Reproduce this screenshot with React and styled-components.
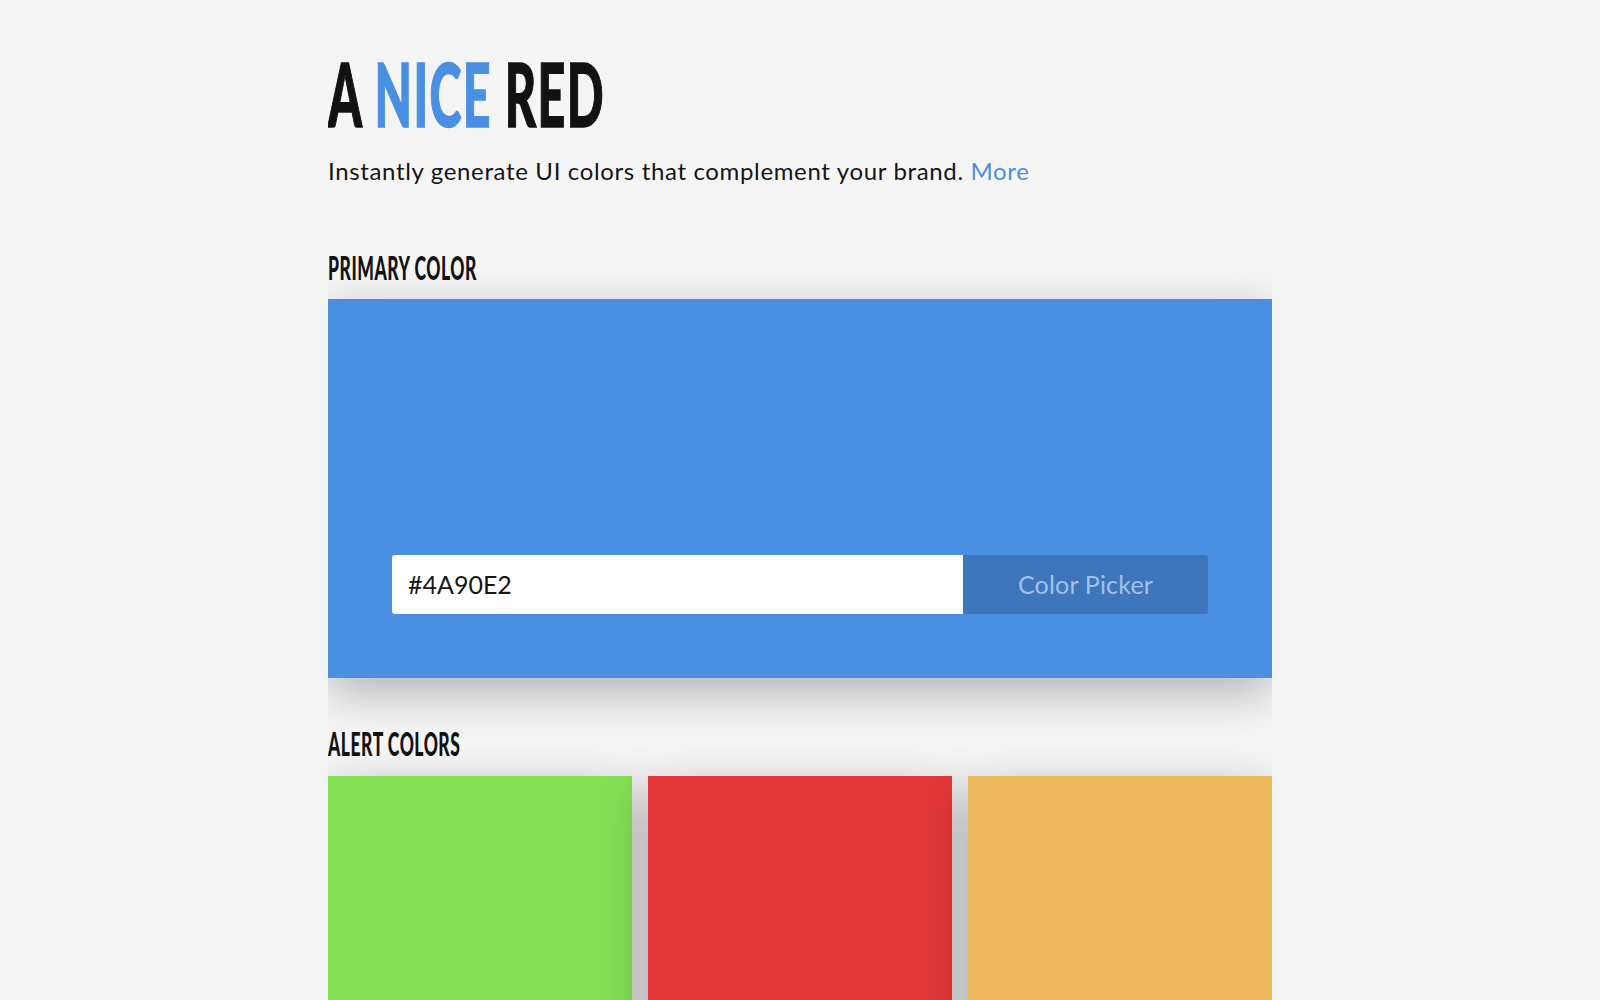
import React from 'react';
import styled, { createGlobalStyle } from 'styled-components';

const GlobalStyle = createGlobalStyle`
    * {
        box-sizing: border-box;
    }

    body {
        margin: 0;
        background: #f5f5f5;
        font-family: Lato, "Noto Sans", sans-serif;
        color: #141414;
    }
`;

const Page = styled.div`
    width: 944px;
    margin: 0 auto;
    padding-top: 49px;
    height: 1000px;
    overflow: hidden;
`;

// tall condensed display type: a heavy face squeezed horizontally
const Condensed = styled.h1`
    display: block;
    width: max-content;
    margin: ${({ $top }) => $top || 0}px 0 0;
    font-family: Lato, "Liberation Sans", sans-serif;
    font-weight: 900;
    font-size: ${({ $size }) => $size}px;
    line-height: 1;
    letter-spacing: ${({ $spacing }) => $spacing || 0}px;
    color: #121212;
    text-transform: uppercase;
    white-space: nowrap;
    transform: scaleX(${({ $squeeze }) => $squeeze});
    transform-origin: left top;
    -webkit-text-stroke: ${({ $stroke }) => $stroke || 0}px currentColor;
`;

const Accent = styled.span`
    color: #4a90e2;
`;

const Tagline = styled.p`
    margin: 20px 0 0;
    font-size: 24px;
    line-height: 1.2;
    letter-spacing: 0.65px;
    color: #151515;

    a {
        color: #4a90e2;
        text-decoration: none;
    }
`;

const PrimaryCard = styled.div`
    height: 379px;
    margin-top: 15px;
    padding: 64px;
    background: #4a90e2;
    box-shadow: 0 14px 44px rgba(0, 0, 0, 0.28);
    display: flex;
    flex-direction: column;
    justify-content: flex-end;
`;

const InputGroup = styled.div`
    display: flex;
    height: 59px;
`;

const HexInput = styled.input`
    flex: 1;
    border: none;
    outline: none;
    border-radius: 3px 0 0 3px;
    background: #fff;
    padding: 0 16px;
    font-family: Lato, sans-serif;
    font-size: 25px;
    color: #161616;
`;

const PickerButton = styled.button`
    width: 245px;
    border: none;
    border-radius: 0 3px 3px 0;
    background: #3d76bb;
    color: #a2c1e8;
    font-family: Lato, sans-serif;
    font-size: 25px;
    letter-spacing: 0.2px;
    cursor: pointer;
`;

const SwatchRow = styled.div`
    display: grid;
    grid-template-columns: repeat(3, 1fr);
    gap: 16px;
    margin-top: 16px;
`;

const Swatch = styled.div`
    height: 380px;
    background: ${({ $color }) => $color};
    box-shadow: 0 14px 44px rgba(0, 0, 0, 0.28);
`;

const alerts = ['#84df55', '#e33636', '#ecb95e'];

const App = () => {
    return (
        <>
            <GlobalStyle />
            <Page>
                <Condensed $size={88} $squeeze={0.55} $spacing={2.5} $stroke={1.5}>
                    A <Accent>Nice</Accent> Red
                </Condensed>
                <Tagline>
                    Instantly generate UI colors that complement your brand. <a href="#more">More</a>
                </Tagline>

                <Condensed as="h2" $size={33} $squeeze={0.53} $spacing={1} $top={65}>
                    Primary Color
                </Condensed>
                <PrimaryCard>
                    <InputGroup>
                        <HexInput defaultValue="#4A90E2" />
                        <PickerButton>Color Picker</PickerButton>
                    </InputGroup>
                </PrimaryCard>

                <Condensed as="h2" $size={33} $squeeze={0.53} $spacing={1} $top={49}>
                    Alert Colors
                </Condensed>
                <SwatchRow>
                    {alerts.map((color) => (
                        <Swatch key={color} $color={color} />
                    ))}
                </SwatchRow>
            </Page>
        </>
    );
};

export default App;
